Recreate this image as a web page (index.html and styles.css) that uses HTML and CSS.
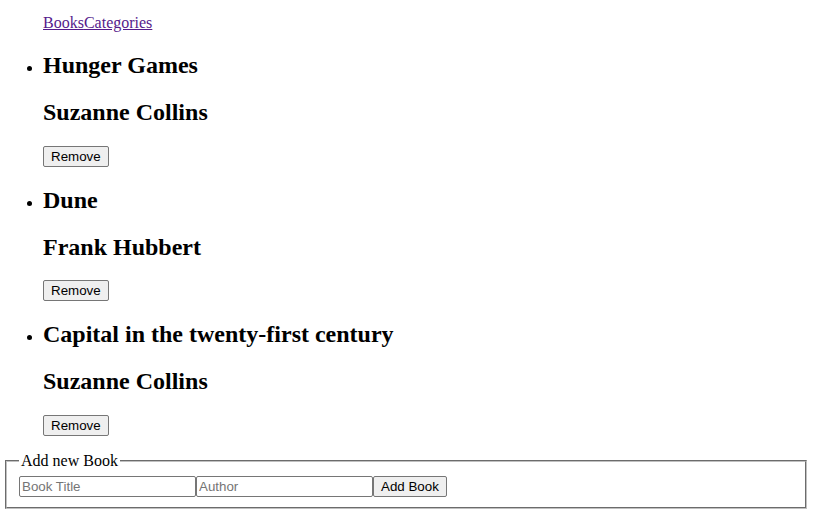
FILE: index.html
```html
<!DOCTYPE html>
<html>
<head>
<meta charset="utf-8">
<link rel="stylesheet" href="styles.css">
</head>
<body>
<nav class="nav">
  <ul class="nav-list">
    <li class="nav-item"><a class="nav-link" href="#">Books</a><a class="nav-link" href="#">Categories</a></li>
  </ul>
</nav>
<ul class="books">
  <li class="book">
    <h2 class="book-title">Hunger Games</h2>
    <h2 class="book-author">Suzanne Collins</h2>
    <button class="btn" type="button">Remove</button>
  </li>
  <li class="book">
    <h2 class="book-title">Dune</h2>
    <h2 class="book-author">Frank Hubbert</h2>
    <button class="btn" type="button">Remove</button>
  </li>
  <li class="book">
    <h2 class="book-title">Capital in the twenty-first century</h2>
    <h2 class="book-author">Suzanne Collins</h2>
    <button class="btn" type="button">Remove</button>
  </li>
</ul>
<form class="add-form">
  <fieldset class="add-fieldset">
    <legend class="add-legend">Add new Book</legend>
    <input class="field" type="text" placeholder="Book Title"><input class="field" type="text" placeholder="Author"><button class="btn" type="button">Add Book</button>
  </fieldset>
</form>
</body>
</html>
```
FILE: styles.css
```css
html, body {
  background: #fff;
}
body {
  margin: 0 3px;
  font-family: "Liberation Serif", "Times New Roman", serif;
  font-size: 16px;
  color: #000;
}
.nav-list {
  margin: 14px 0 0;
  padding-left: 40px;
  list-style: none;
}
.nav-link {
  color: #551a8b;
  text-decoration: underline;
}
.books {
  margin: 16px 0;
  padding-left: 40px;
  list-style: disc;
}
.book-title, .book-author {
  font-size: 24px;
  font-weight: bold;
  margin: 19.92px 0;
}
.btn {
  font-family: "Liberation Sans", Arial, sans-serif;
  font-size: 13.333px;
  line-height: 15px;
  color: #000;
  background: #efefef;
  border: 1px solid #767676;
  border-radius: 2px;
  padding: 2px 7px;
  margin: 0;
}
.add-form {
  margin: 0;
}
.add-fieldset {
  margin: 0 5px 0 2px;
  padding: 5.6px 12px 10px;
  border: 2px groove #c0c0c0;
}
.add-legend {
  padding: 0 2px;
}
.field {
  font-family: "Liberation Sans", Arial, sans-serif;
  font-size: 13.333px;
  line-height: 15px;
  padding: 2px 2px;
  border: 1px solid #767676;
  border-radius: 2px;
  margin: 0;
  width: 171px;
}
.field::placeholder {
  color: #757575;
}
```
